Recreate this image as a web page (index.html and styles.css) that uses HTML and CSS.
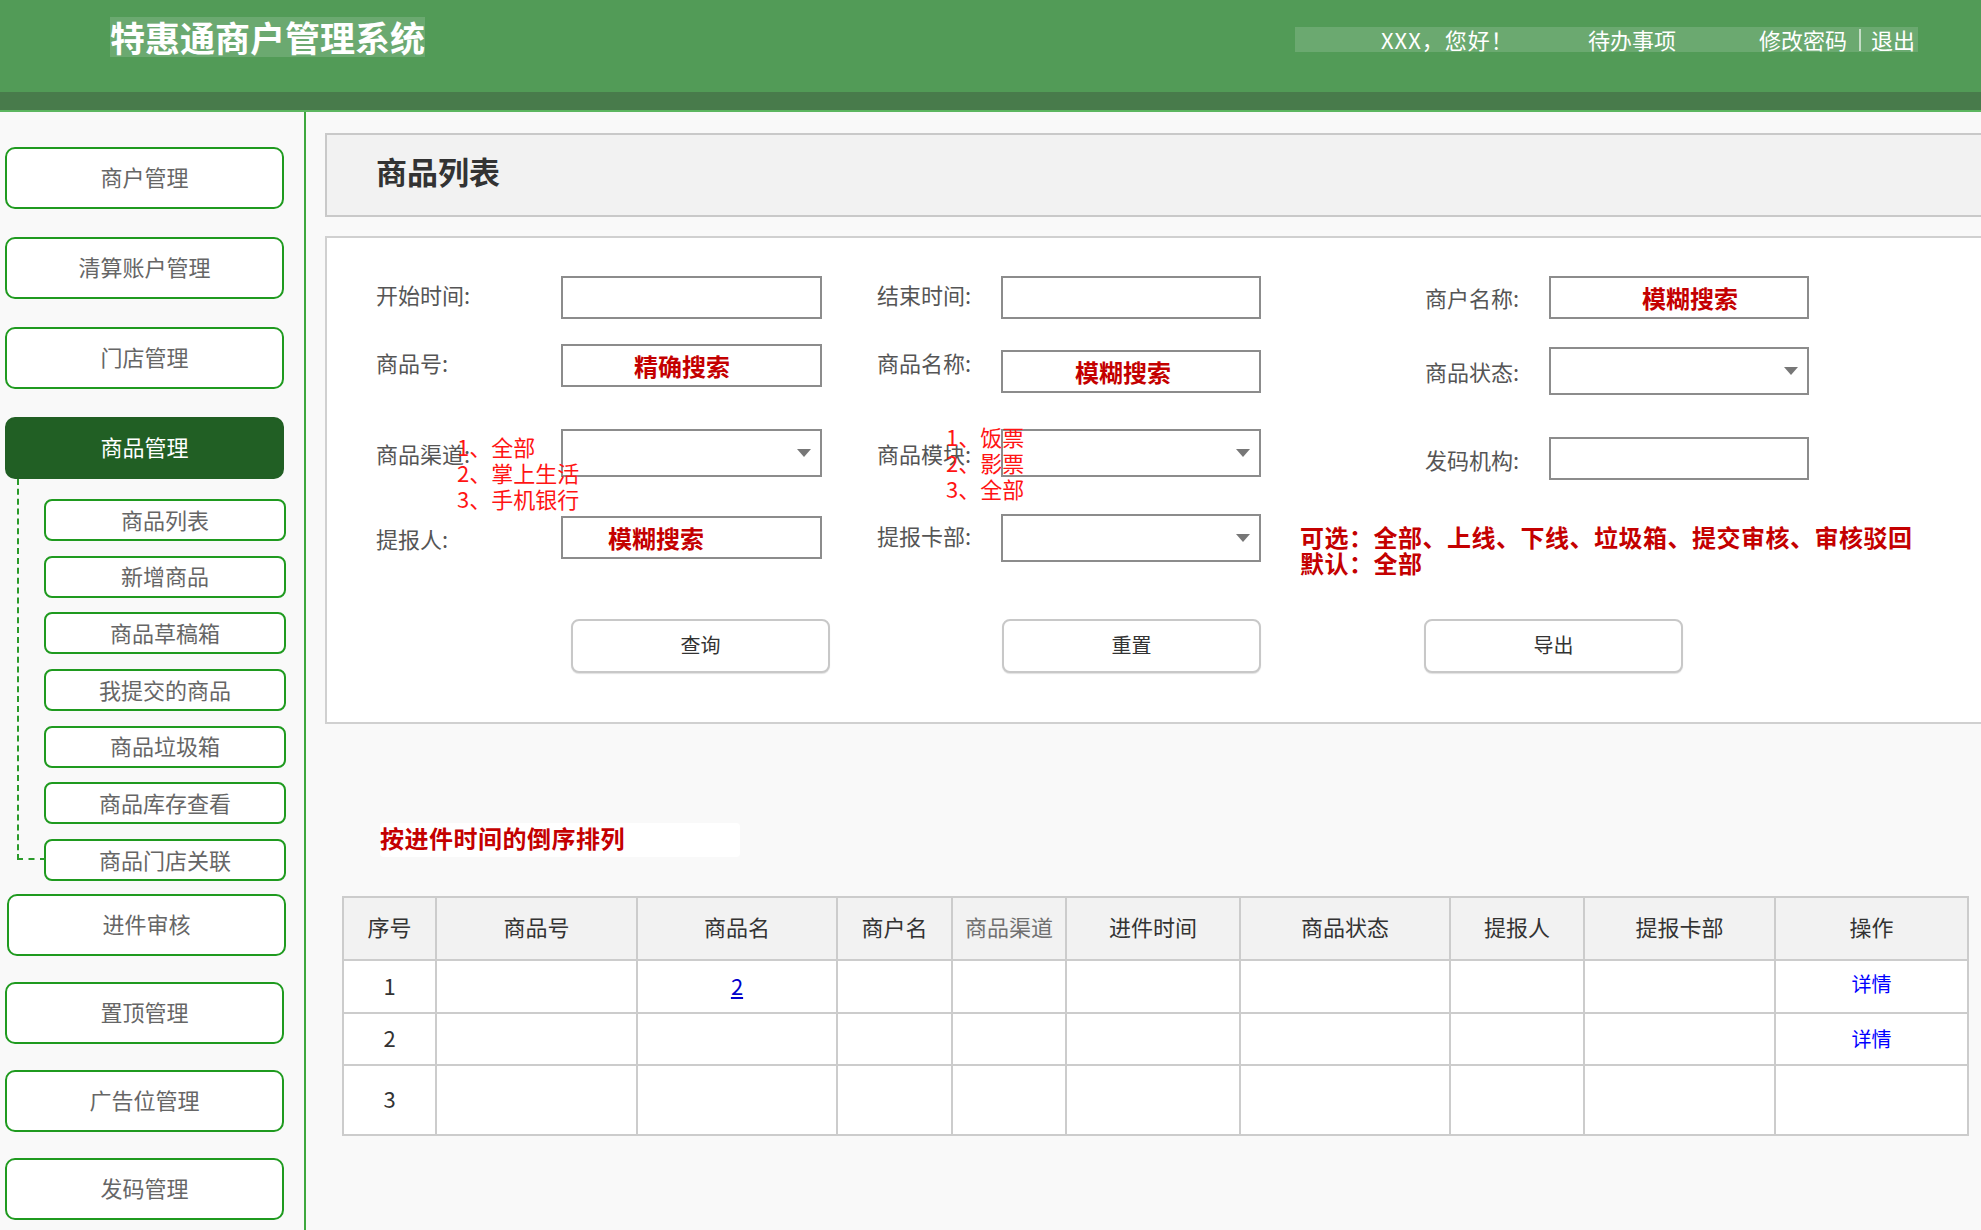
FILE: index.html
```html
<!DOCTYPE html>
<html lang="zh-CN">
<head>
<meta charset="utf-8">
<title>特惠通商户管理系统</title>
<link rel="stylesheet" href="styles.css">
</head>
<body>
<header class="topbar">
  <div class="brand">特惠通商户管理系统</div>
  <nav class="user-nav">
    <span class="greet">XXX，您好！</span>
    <a class="todo">待办事项</a>
    <a class="pwd">修改密码</a>
    <span class="sep"></span>
    <a class="logout">退出</a>
  </nav>
</header>
<div class="band"></div>
<div class="layout">
  <aside class="sidebar">
    <a class="nav-btn">商户管理</a>
    <a class="nav-btn">清算账户管理</a>
    <a class="nav-btn">门店管理</a>
    <a class="nav-btn active">商品管理</a>
    <div class="submenu">
      <a class="sub-btn">商品列表</a>
      <a class="sub-btn">新增商品</a>
      <a class="sub-btn">商品草稿箱</a>
      <a class="sub-btn">我提交的商品</a>
      <a class="sub-btn">商品垃圾箱</a>
      <a class="sub-btn">商品库存查看</a>
      <a class="sub-btn">商品门店关联</a>
    </div>
    <a class="nav-btn after-sub">进件审核</a>
    <a class="nav-btn lower">置顶管理</a>
    <a class="nav-btn lower">广告位管理</a>
    <a class="nav-btn lower">发码管理</a>
  </aside>
  <main class="main">
    <div class="title-panel"><h1>商品列表</h1></div>
    <div class="search-panel">
      <div class="form-row row1">
        <div class="field f1"><span class="label lbl-up">开始时间:</span><div class="ctrl"></div></div>
        <div class="field f2"><span class="label lbl-up">结束时间:</span><div class="ctrl"></div></div>
        <div class="field f3"><span class="label">商户名称:</span><div class="ctrl pad-merchant">模糊搜索</div></div>
      </div>
      <div class="form-row row2">
        <div class="field f1 up"><span class="label lbl-up">商品号:</span><div class="ctrl pad-goodsno">精确搜索</div></div>
        <div class="field f2"><span class="label lbl-high">商品名称:</span><div class="ctrl pad-goodsname">模糊搜索</div></div>
        <div class="field f3"><span class="label">商品状态:</span><div class="ctrl select"></div></div>
      </div>
      <div class="form-row row3">
        <div class="field f1"><span class="label">商品渠道:</span><div class="ctrl select"></div>
          <div class="options opt-channel">1、全部<br>2、掌上生活<br>3、手机银行</div>
        </div>
        <div class="field f2"><span class="label">商品模块:</span><div class="ctrl select"></div>
          <div class="options opt-module">1、饭票<br>2、影票<br>3、全部</div>
        </div>
        <div class="field f3 down"><span class="label">发码机构:</span><div class="ctrl"></div></div>
      </div>
      <div class="form-row row4">
        <div class="field f1 nudge"><span class="label">提报人:</span><div class="ctrl pad-reporter">模糊搜索</div></div>
        <div class="field f2"><span class="label lbl-up">提报卡部:</span><div class="ctrl select"></div></div>
        <div class="status-note">可选：全部、上线、下线、垃圾箱、提交审核、审核驳回<br>默认：全部</div>
      </div>
      <div class="btn-row">
        <button class="btn" type="button">查询</button>
        <button class="btn btn-reset" type="button">重置</button>
        <button class="btn btn-export" type="button">导出</button>
      </div>
    </div>
    <div class="sort-note">按进件时间的倒序排列</div>
    <table class="grid">
      <colgroup>
        <col class="c1"><col class="c2"><col class="c3"><col class="c4"><col class="c5">
        <col class="c6"><col class="c7"><col class="c8"><col class="c9"><col class="c10">
      </colgroup>
      <thead>
        <tr>
          <th>序号</th><th>商品号</th><th>商品名</th><th>商户名</th><th class="light">商品渠道</th>
          <th>进件时间</th><th>商品状态</th><th>提报人</th><th>提报卡部</th><th>操作</th>
        </tr>
      </thead>
      <tbody>
        <tr class="r1">
          <td>1</td><td></td><td><a class="link">2</a></td><td></td><td></td>
          <td></td><td></td><td></td><td></td><td><a class="detail">详情</a></td>
        </tr>
        <tr class="r2">
          <td>2</td><td></td><td></td><td></td><td></td>
          <td></td><td></td><td></td><td></td><td><a class="detail">详情</a></td>
        </tr>
        <tr class="r3">
          <td>3</td><td></td><td></td><td></td><td></td>
          <td></td><td></td><td></td><td></td><td></td>
        </tr>
      </tbody>
    </table>
  </main>
</div>
</body>
</html>
```

FILE: styles.css
```css
* { box-sizing: border-box; }
html, body { margin: 0; padding: 0; }
body {
  width: 1981px;
  height: 1230px;
  overflow: hidden;
  background: #f9f9f9;
  font-family: "Noto Sans CJK SC", "Noto Sans", sans-serif;
  color: #555;
}
a { text-decoration: none; }

/* ===== header ===== */
.topbar {
  height: 92px;
  background: #529b57;
  display: flex;
  align-items: flex-start;
}
.brand {
  margin: 17px 0 0 110px;
  height: 40px;
  line-height: 40px;
  font-size: 35px;
  font-weight: 700;
  color: #fff;
  background: rgba(255, 255, 255, 0.15);
  white-space: nowrap;
}
.user-nav {
  margin: 27px 63px 0 auto;
  width: 623px;
  height: 25px;
  background: rgba(255, 255, 255, 0.15);
  display: flex;
  align-items: center;
  padding-left: 86px;
  font-size: 22px;
  line-height: 25px;
  color: #fff;
  white-space: nowrap;
}
.user-nav a { color: #fff; }
.greet { width: 207px; letter-spacing: 1px; }
.todo { width: 171px; }
.sep {
  width: 2px;
  height: 22px;
  margin: 0 10px 0 12px;
  background: rgba(255, 255, 255, 0.6);
}
.band {
  height: 20px;
  background: #487b4b;
  border-bottom: 2px solid #5cb660;
}

/* ===== layout ===== */
.layout {
  display: flex;
  height: 1118px;
}
.sidebar {
  flex: 0 0 306px;
  width: 306px;
  border-right: 2px solid #3ea83e;
  padding-top: 35px;
  background: #f9f9f9;
}
.nav-btn {
  display: flex;
  align-items: center;
  justify-content: center;
  width: 279px;
  height: 62px;
  margin: 0 0 28px 5px;
  padding-bottom: 4px;
  border: 2px solid #1f9a1f;
  border-radius: 10px;
  background: #fff;
  color: #666;
  font-size: 22px;
}
.nav-btn.active {
  background: #215f24;
  border-color: #215f24;
  color: #fff;
  margin-bottom: 0;
}
.nav-btn.after-sub {
  margin-top: 13px;
  margin-left: 7px;
  margin-bottom: 26px;
}
.nav-btn.lower { margin-bottom: 26px; }
.submenu {
  position: relative;
  padding-top: 20px;
}
.submenu::before {
  content: "";
  position: absolute;
  left: 17px;
  top: 0;
  width: 27px;
  height: 379px;
  border-left: 2px dashed #2a9a2a;
  border-bottom: 2px dashed #2a9a2a;
}
.sub-btn {
  display: flex;
  align-items: center;
  justify-content: center;
  width: 242px;
  height: 42px;
  margin: 0 0 14.7px 44px;
  padding-bottom: 3px;
  border: 2px solid #1f9a1f;
  border-radius: 8px;
  background: #fff;
  color: #666;
  font-size: 22px;
}
.sub-btn:last-child { margin-bottom: 0; }

/* ===== main ===== */
.main {
  flex: 1 1 auto;
  min-width: 0;
  padding: 21px 0 0 19px;
  overflow: hidden;
}
.title-panel {
  width: 1700px;
  height: 84px;
  border: 2px solid #c9c9c9;
  background: #f2f2f2;
  padding-left: 49px;
  display: flex;
  align-items: center;
}
.title-panel h1 {
  margin: 0 0 8px 0;
  font-size: 31px;
  font-weight: 700;
  color: #333;
  line-height: 40px;
}
.search-panel {
  width: 1700px;
  height: 488px;
  margin-top: 19px;
  border: 2px solid #d0d0d0;
  background: #fff;
  padding: 36px 0 0 49px;
}
.form-row { display: flex; }
.row1 { height: 46px; align-items: center; margin-bottom: 24px; }
.row2 { height: 54px; align-items: center; margin-bottom: 27px; }
.row3 { height: 55px; align-items: center; margin-bottom: 34px; }
.row4 { height: 64px; align-items: flex-start; }

.field {
  position: relative;
  display: flex;
  align-items: center;
}
.f1 { width: 446px; }
.f2 { width: 384px; margin-left: 55px; }
.f3 { width: 384px; margin-left: 164px; }
.field.up { margin-bottom: 11px; }
.field.down { margin-top: 12px; }
.field.nudge { margin-top: 2px; }

.label {
  flex: 0 0 124px;
  font-size: 22px;
  line-height: 30px;
  color: #555;
  white-space: nowrap;
}
.f1 .label { flex-basis: 185px; }
.label.lbl-up { margin-bottom: 7px; }
.label.lbl-high { margin-bottom: 18px; }

.ctrl {
  position: relative;
  width: 260px;
  height: 43px;
  border: 2px solid #8c8c8c;
  background: #fff;
  font-size: 24px;
  font-weight: 700;
  line-height: 39px;
  color: #c40000;
  white-space: nowrap;
}
.f1 .ctrl { width: 261px; }
.ctrl.select { height: 48px; }
.ctrl.select::after {
  content: "";
  position: absolute;
  right: 9px;
  top: 50%;
  margin-top: -4px;
  border-left: 7px solid transparent;
  border-right: 7px solid transparent;
  border-top: 8px solid #777;
}
.pad-merchant { padding-left: 91px; }
.pad-goodsno { padding-left: 71px; }
.pad-goodsname { padding-left: 72px; }
.pad-reporter { padding-left: 45px; }

.options {
  position: absolute;
  z-index: 2;
  font-size: 22px;
  line-height: 26px;
  color: #ff1414;
  white-space: nowrap;
}
.opt-channel { left: 81px; top: 4px; }
.opt-module { left: 69px; top: -6px; }

.status-note {
  margin: 10px 0 0 39px;
  font-size: 24px;
  font-weight: 700;
  line-height: 26px;
  letter-spacing: 0.5px;
  color: #c40000;
  white-space: nowrap;
}

.btn-row {
  display: flex;
  margin: 41px 0 0 195px;
}
.btn {
  width: 259px;
  height: 54px;
  border: 2px solid #c8c8c8;
  border-radius: 8px;
  background: #fff;
  box-shadow: 0 1px 1px rgba(0, 0, 0, 0.12);
  font-family: inherit;
  font-size: 20px;
  color: #333;
  padding: 0 0 3px 0;
}
.btn-reset { margin-left: 172px; }
.btn-export { margin-left: 163px; }

.sort-note {
  width: 360px;
  height: 34px;
  margin: 99px 0 0 55px;
  background: #fff;
  border-radius: 4px;
  font-size: 24px;
  font-weight: 700;
  line-height: 30px;
  letter-spacing: 0.5px;
  color: #c40000;
  white-space: nowrap;
}

/* ===== table ===== */
.grid {
  margin: 39px 0 0 17px;
  width: 1625px;
  table-layout: fixed;
  border-collapse: collapse;
  background: #fff;
}
.c1 { width: 93px; }
.c2 { width: 201px; }
.c3 { width: 200px; }
.c4 { width: 115px; }
.c5 { width: 114px; }
.c6 { width: 174px; }
.c7 { width: 210px; }
.c8 { width: 134px; }
.c9 { width: 191px; }
.c10 { width: 193px; }
.grid th,
.grid td {
  border: 2px solid #cccccc;
  text-align: center;
  padding: 0 0 4px 0;
  font-size: 22px;
  color: #333;
  font-weight: 400;
}
.grid th {
  height: 63px;
  background: #f2f2f2;
  padding-bottom: 6px;
}
.grid th.light { color: #707070; }
.r1 td { height: 53px; }
.r2 td { height: 52px; }
.r3 td { height: 70px; }
.link {
  color: #0000cc;
  text-decoration: underline;
}
.detail {
  color: #0000ff;
  font-size: 20px;
}
.r1 .detail { position: relative; top: -3px; }
```
